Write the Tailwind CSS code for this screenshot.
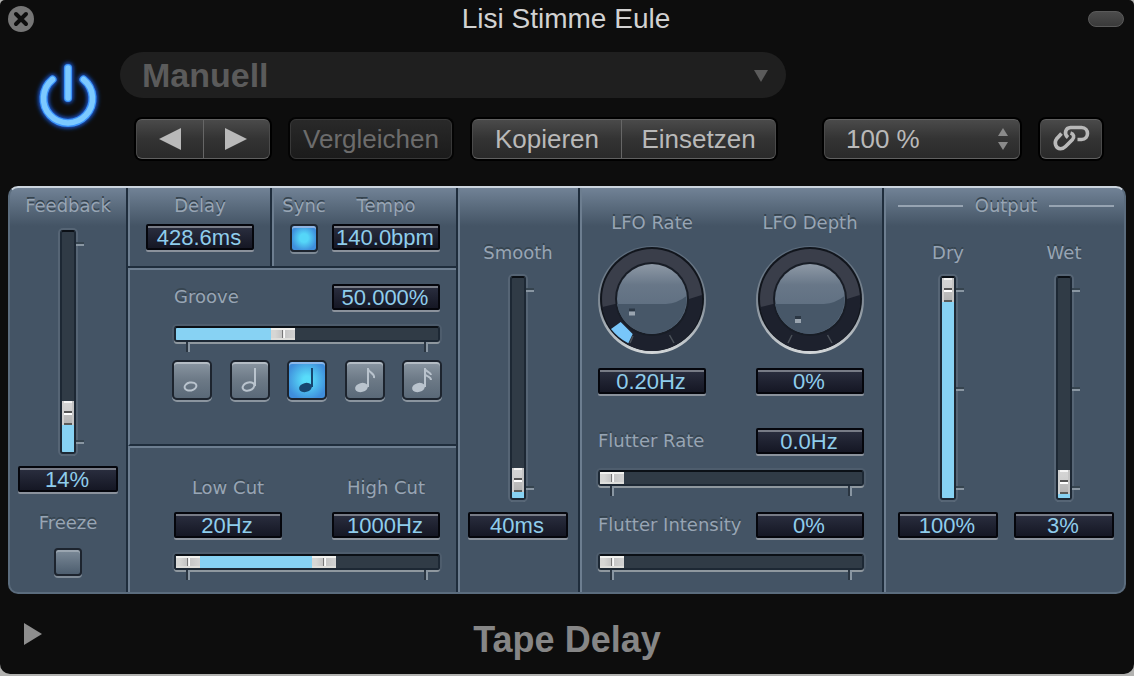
<!DOCTYPE html>
<html lang="de">

<head>
    <meta charset="UTF-8" />
    <meta name="viewport" content="width=device-width, initial-scale=1.0" />
    <title>Tape Delay</title>
    <script src="https://cdn.jsdelivr.net/npm/@tailwindcss/browser@4"></script>
</head>

<body class="min-h-screen bg-[#b2b2b0] font-['Liberation_Sans',Arial,sans-serif]">
    <main class="rounded-t-[5px] rounded-b-[10px] bg-[#0d0d0d]">
        <!-- Title bar -->
        <div class="grid h-[38px] grid-cols-[1fr_auto_1fr] items-center pl-2 pr-[10px]">
            <button aria-label="Schließen" class="size-[26px]">
                <svg viewBox="0 0 26 26" class="size-[26px]">
                    <circle cx="13" cy="13" r="13" fill="#767676" />
                    <path d="M8 8l10 10M18 8L8 18" stroke="#0d0d0d" stroke-width="4" stroke-linecap="round" />
                </svg>
            </button>
            <h1 class="text-[28px] leading-8 text-[#d2d2d2]">Lisi Stimme Eule</h1>
            <button aria-label="Minimieren" class="h-4 w-9 justify-self-end rounded-full border border-[#5a5a5a] bg-linear-to-b from-[#4c4c4c] to-[#3a3a3a]"></button>
        </div>

        <!-- Plug-in header -->
        <div class="flex pb-[27px] pt-[14px]">
            <button aria-label="Power" class="h-[88px] w-[120px] shrink-0 pl-[28px]">
                <svg viewBox="0 0 80 88" class="h-[88px] w-20 overflow-visible">
                    <defs>
                        <filter id="glow" x="-50%" y="-50%" width="200%" height="200%">
                            <feGaussianBlur stdDeviation="2.2" />
                        </filter>
                    </defs>
                    <g fill="none" stroke-linecap="round">
                        <g stroke="#1c62f0" stroke-width="10" filter="url(#glow)">
                            <path d="M24.500 27.500A24.500 24.500 0 1 0 55.500 27.500" />
                            <path d="M40 16V46" />
                        </g>
                        <g stroke="#3c95fb" stroke-width="8">
                            <path d="M24.500 27.500A24.500 24.500 0 1 0 55.500 27.500" />
                            <path d="M40 16V46" />
                        </g>
                        <g stroke="#7cc9ff" stroke-width="5.500">
                            <path d="M24.500 27.500A24.500 24.500 0 1 0 55.500 27.500" />
                            <path d="M40 16V46" />
                        </g>
                    </g>
                </svg>
            </button>
            <div class="flex-1">
                <div class="pr-[348px]">
                    <div class="relative">
                        <select aria-label="Preset" class="block h-[46px] w-full appearance-none rounded-full bg-[#1f1f1f] pl-[22px] text-[34px] font-bold leading-[46px] text-[#5b5b5b]">
                            <option>Manuell</option>
                        </select>
                        <svg viewBox="0 0 14 12" class="pointer-events-none absolute right-[18px] top-[18px] h-3 w-[14px]">
                            <path d="M0 0H14L7 12Z" fill="#5b5b5b" />
                        </svg>
                    </div>
                </div>
                <div class="mt-[21px] flex gap-5 pl-4 pr-8 text-[26px] leading-9 text-[#b9b9b9]">
                    <div class="flex h-10 w-[134px] rounded-md border border-[#606060] border-x-[#4a4a4a] bg-linear-to-b from-[#4a4a4a] via-[#333] to-[#2a2a2a] shadow-[0_0_0_2px_#000]">
                        <button aria-label="Vorheriges Preset" class="flex flex-1 items-center justify-center border-r border-[#666]">
                            <svg viewBox="0 0 22 22" class="size-[22px]"><path d="M22 0V22L0 11Z" fill="#b9b9b9" /></svg>
                        </button>
                        <button aria-label="Nächstes Preset" class="flex flex-1 items-center justify-center">
                            <svg viewBox="0 0 22 22" class="size-[22px]"><path d="M0 0V22L22 11Z" fill="#b9b9b9" /></svg>
                        </button>
                    </div>
                    <button class="h-10 w-[162px] rounded-md border border-[#383838] bg-linear-to-b from-[#292929] to-[#1b1b1b] text-[#6c6c6c] shadow-[0_0_0_2px_#040404]">Vergleichen</button>
                    <div class="flex h-10 w-[304px] rounded-md border border-[#606060] border-x-[#4a4a4a] bg-linear-to-b from-[#4a4a4a] via-[#333] to-[#2a2a2a] shadow-[0_0_0_2px_#000]">
                        <button class="w-[149px] border-r border-[#666]">Kopieren</button>
                        <button class="flex-1">Einsetzen</button>
                    </div>
                    <div class="relative ml-auto w-[196px]">
                        <select aria-label="Ansicht" class="block h-10 w-full appearance-none rounded-md border border-[#606060] border-x-[#4a4a4a] bg-linear-to-b from-[#4a4a4a] via-[#333] to-[#2a2a2a] pl-[21px] shadow-[0_0_0_2px_#000]">
                            <option>100 %</option>
                        </select>
                        <svg viewBox="0 0 10 22" class="pointer-events-none absolute right-3 top-[9px] h-[22px] w-[10px]">
                            <path d="M0 8L5 0L10 8ZM0 14H10L5 22Z" fill="#8a8a8a" />
                        </svg>
                    </div>
                    <button aria-label="Verknüpfen" class="flex h-10 w-[62px] items-center justify-center rounded-md border border-[#606060] border-x-[#4a4a4a] bg-linear-to-b from-[#4a4a4a] via-[#333] to-[#2a2a2a] shadow-[0_0_0_2px_#000]">
                        <svg viewBox="0 0 38 30" class="h-[30px] w-[38px]" fill="none" stroke="#b9b9b9" stroke-width="3.600">
                            <path d="M9.500 9.500L4.500 15C2 18.500 3.500 24.500 8.500 24.800C10.500 24.800 12 24 13.500 22.500L20.500 15.500C22.500 13 22 10 18.500 9" />
                            <path d="M16 13.500C11.500 10 13.500 3.700 18.500 3.500H29.500C37.500 3.700 37.500 15.300 29.500 15.500H25.500" />
                        </svg>
                    </button>
                </div>
            </div>
        </div>

        <!-- Parameter panel -->
        <div class="mx-2 grid grid-cols-[118fr_330fr_122fr_304fr_240fr] rounded-[10px] border-2 border-[#5b6c7d] border-t-[#cbd4de] bg-[#445465] bg-[linear-gradient(#718296,#5b6c7e_18px,#445465_38px)]">
            <!-- Feedback -->
            <div class="flex flex-col items-center border-r-2 border-[#1f2d3c] pt-2">
                <label data-label for="feedback">Feedback</label>
                <div class="mt-[14px] flex pl-2">
                    <input type="range" data-fader="v" id="feedback" value="14" />
                    <div data-ticks="v"><i></i><i></i></div>
                </div>
                <input type="text" data-field aria-label="Feedback Wert" class="mt-3 w-[100px]" value="14%" />
                <label data-label for="freeze" class="mt-[21px]">Freeze</label>
                <input type="checkbox" data-toggle id="freeze" class="mt-[15px]" />
            </div>

            <!-- Delay, groove, filter -->
            <div class="border-r-2 border-[#1f2d3c]">
                <div class="grid grid-cols-[144fr_184fr] border-b-2 border-[#1f2d3c]">
                    <div class="flex flex-col items-center border-x-2 border-l-[#6d7e90] border-r-[#1f2d3c] pt-2">
                        <label data-label for="delay">Delay</label>
                        <input type="text" data-field id="delay" class="mt-2 w-[108px]" value="428.6ms" />
                    </div>
                    <div class="flex justify-end border-l-2 border-[#6d7e90] pb-[14px] pr-4 pt-2">
                        <div class="flex w-14 flex-col items-center">
                            <label data-label for="sync">Sync</label>
                            <input type="checkbox" data-toggle id="sync" class="mt-2" checked />
                        </div>
                        <div class="flex flex-col items-center">
                            <label data-label for="tempo">Tempo</label>
                            <input type="text" data-field id="tempo" class="mt-2 w-[108px]" value="140.0bpm" />
                        </div>
                    </div>
                </div>
                <div class="border-b-2 border-l-2 border-t-2 border-b-[#1f2d3c] border-l-[#6d7e90] border-t-[#6d7e90] pb-11 pl-11 pr-4 pt-[14px]">
                    <div class="flex items-center justify-between">
                        <label data-label for="groove">Groove</label>
                        <input type="text" data-field aria-label="Groove Wert" class="w-[108px]" value="50.000%" />
                    </div>
                    <input type="range" data-fader="h" id="groove" class="mt-4" value="40" />
                    <div data-ticks="h"><i></i><i></i></div>
                    <div class="-mx-[2px] mt-2 flex justify-between">
                        <button data-note aria-label="Ganze Note">
                            <svg viewBox="0 0 36 36" fill="none" stroke="#b9c3cd" stroke-width="2">
                                <ellipse cx="16.500" cy="24.500" rx="6" ry="4" transform="rotate(-12 16.500 24.500)" />
                            </svg>
                        </button>
                        <button data-note aria-label="Halbe Note">
                            <svg viewBox="0 0 36 36" fill="none" stroke="#b9c3cd" stroke-width="2">
                                <ellipse cx="16.500" cy="24.500" rx="6" ry="4" transform="rotate(-18 16.500 24.500)" />
                                <path d="M23 6V24" />
                            </svg>
                        </button>
                        <button data-note aria-label="Viertelnote" aria-pressed="true">
                            <svg viewBox="0 0 36 36" fill="#17466f" stroke="#17466f">
                                <ellipse cx="16.500" cy="25.500" rx="6.500" ry="4.500" stroke="none" transform="rotate(-15 16.500 25.500)" />
                                <path d="M23 6V25" stroke-width="2" />
                            </svg>
                        </button>
                        <button data-note aria-label="Achtelnote">
                            <svg viewBox="0 0 36 36" fill="#b9c3cd" stroke="#b9c3cd">
                                <ellipse cx="14.500" cy="25.500" rx="6.500" ry="4.500" stroke="none" transform="rotate(-15 14.500 25.500)" />
                                <path d="M21 6V25M21 7C22 11 28 11 27 16" fill="none" stroke-width="2" />
                            </svg>
                        </button>
                        <button data-note aria-label="Sechzehntelnote">
                            <svg viewBox="0 0 36 36" fill="#b9c3cd" stroke="#b9c3cd">
                                <ellipse cx="14.500" cy="25.500" rx="6.500" ry="4.500" stroke="none" transform="rotate(-15 14.500 25.500)" />
                                <path d="M21 6V25M21 7C22 10 27 10 27 13M21 12C22 15 27 14 27 18" fill="none" stroke-width="2" />
                            </svg>
                        </button>
                    </div>
                </div>
                <div class="border-l-2 border-t-2 border-[#6d7e90] pb-3 pl-11 pr-4 pt-[30px]">
                    <div class="flex justify-between">
                        <div class="flex w-[108px] flex-col items-center">
                            <label data-label for="lowcut">Low Cut</label>
                            <input type="text" data-field aria-label="Low Cut Wert" class="mt-[14px] w-full" value="20Hz" />
                        </div>
                        <div class="flex w-[108px] flex-col items-center">
                            <label data-label for="highcut">High Cut</label>
                            <input type="text" data-field aria-label="High Cut Wert" class="mt-[14px] w-full" value="1000Hz" />
                        </div>
                    </div>
                    <!-- two thumbs share one track -->
                    <div class="mt-4 grid">
                        <input type="range" data-fader="h" id="highcut" class="col-start-1 row-start-1" value="57" />
                        <input type="range" data-fader="h" data-over id="lowcut" class="col-start-1 row-start-1" value="0" />
                    </div>
                    <div data-ticks="h"><i></i><i></i></div>
                </div>
            </div>

            <!-- Smooth -->
            <div class="flex flex-col items-center border-x-2 border-l-[#6d7e90] border-r-[#1f2d3c] pr-[2px] pt-[55px]">
                <label data-label for="smooth">Smooth</label>
                <div class="mt-[13px] flex pl-2">
                    <input type="range" data-fader="v" id="smooth" value="3" />
                    <div data-ticks="v"><i></i><i></i></div>
                </div>
                <input type="text" data-field aria-label="Smooth Wert" class="mt-3 w-[100px]" value="40ms" />
            </div>

            <!-- LFO and flutter -->
            <div class="border-x-2 border-l-[#6d7e90] border-r-[#1f2d3c] pl-4 pr-[18px] pt-[25px]">
                <div class="flex justify-between">
                    <div class="flex flex-col items-center">
                        <label data-label for="lforate">LFO Rate</label>
                        <div class="relative mt-[13px] size-[108px]">
                            <svg viewBox="0 0 108 108" class="size-[108px]">
                                <defs>
                                    <linearGradient id="rim" x1="0" y1="0" x2="0" y2="1">
                                        <stop offset="0" stop-color="#59697a" />
                                        <stop offset=".5" stop-color="#7d8893" />
                                        <stop offset="1" stop-color="#d3d7d9" />
                                    </linearGradient>
                                    <linearGradient id="cap" x1="0" y1="0" x2="0" y2="1">
                                        <stop offset="0" stop-color="#8e99a6" />
                                        <stop offset=".3" stop-color="#687788" />
                                        <stop offset="1" stop-color="#56677a" />
                                    </linearGradient>
                                </defs>
                                <circle cx="54" cy="54" r="54" fill="url(#rim)" />
                                <circle cx="54" cy="53" r="52" fill="#11151c" />
                                <circle cx="54" cy="53" r="50" fill="#3a3e4a" />
                                <path d="M4.500 61L17 58L91 53L103.800 49A50 50 0 0 1 4.500 61Z" fill="#1d212d" />
                                <path d="M35 90L32 97M71.500 89L76 97" stroke="#4a5058" stroke-width="1.500" />
                                <circle cx="54" cy="53" r="37" fill="#181d26" />
                                <circle cx="54" cy="53" r="35" fill="url(#cap)" />
                                <path d="M13 83L22.700 76L34.700 88L30.300 97.300Q20 92 13 83Z" fill="#78c6fa" />
                                <path d="M19 58H68Q80 57 88.500 50A35 35 0 0 1 19 58Z" fill="#475768" />
                                <path d="M31 64H37" stroke="#2b3744" stroke-width="3" />
                                <path d="M31 67.500H37" stroke="#9aa5b0" stroke-width="4" />
                            </svg>
                            <input type="range" id="lforate" class="absolute inset-0 size-full opacity-0" value="8" />
                        </div>
                        <input type="text" data-field aria-label="LFO Rate Wert" class="mt-[14px] w-[108px]" value="0.20Hz" />
                    </div>
                    <div class="flex flex-col items-center">
                        <label data-label for="lfodepth">LFO Depth</label>
                        <div class="relative mt-[13px] size-[108px]">
                            <svg viewBox="0 0 108 108" class="size-[108px]">
                                <circle cx="54" cy="54" r="54" fill="url(#rim)" />
                                <circle cx="54" cy="53" r="52" fill="#11151c" />
                                <circle cx="54" cy="53" r="50" fill="#3a3e4a" />
                                <path d="M4.500 61L17 58L91 53L103.800 49A50 50 0 0 1 4.500 61Z" fill="#1d212d" />
                                <path d="M36 89L32 97M71.500 89L76 97" stroke="#4a5058" stroke-width="1.500" />
                                <circle cx="54" cy="53" r="37" fill="#181d26" />
                                <circle cx="54" cy="53" r="35" fill="url(#cap)" />
                                <path d="M19 58H68Q80 57 88.500 50A35 35 0 0 1 19 58Z" fill="#475768" />
                                <path d="M39 71.500H45" stroke="#2b3744" stroke-width="3" />
                                <path d="M39 75H45" stroke="#9aa5b0" stroke-width="4" />
                            </svg>
                            <input type="range" id="lfodepth" class="absolute inset-0 size-full opacity-0" value="0" />
                        </div>
                        <input type="text" data-field aria-label="LFO Depth Wert" class="mt-[14px] w-[108px]" value="0%" />
                    </div>
                </div>
                <div class="mt-[34px] flex items-center justify-between">
                    <label data-label for="flutterrate">Flutter Rate</label>
                    <input type="text" data-field aria-label="Flutter Rate Wert" class="w-[108px]" value="0.0Hz" />
                </div>
                <input type="range" data-fader="h" id="flutterrate" class="mt-4" value="0" />
                <div data-ticks="h"><i></i><i></i></div>
                <div class="mt-4 flex items-center justify-between">
                    <label data-label for="flutterint">Flutter Intensity</label>
                    <input type="text" data-field aria-label="Flutter Intensity Wert" class="w-[108px]" value="0%" />
                </div>
                <input type="range" data-fader="h" id="flutterint" class="mt-4" value="0" />
                <div data-ticks="h"><i></i><i></i></div>
            </div>

            <!-- Output -->
            <div class="border-l-2 border-[#6d7e90] pl-3 pr-[10px] pt-2">
                <div class="flex items-center gap-3">
                    <span class="h-[2px] flex-1 bg-[#97a4b2]"></span>
                    <h2 data-label>Output</h2>
                    <span class="h-[2px] flex-1 bg-[#97a4b2]"></span>
                </div>
                <div class="mt-[27px] flex justify-between">
                    <div class="flex flex-col items-center">
                        <label data-label for="dry">Dry</label>
                        <div class="mt-[13px] flex pl-2">
                            <input type="range" data-fader="v" id="dry" value="100" />
                            <div data-ticks="v"><i></i><i></i><i></i></div>
                        </div>
                        <input type="text" data-field aria-label="Dry Wert" class="mt-3 w-[100px]" value="100%" />
                    </div>
                    <div class="flex flex-col items-center">
                        <label data-label for="wet">Wet</label>
                        <div class="mt-[13px] flex pl-2">
                            <input type="range" data-fader="v" id="wet" value="2" />
                            <div data-ticks="v"><i></i><i></i><i></i></div>
                        </div>
                        <input type="text" data-field aria-label="Wet Wert" class="mt-3 w-[100px]" value="3%" />
                    </div>
                </div>
            </div>
        </div>

        <!-- Footer -->
        <div class="grid h-20 grid-cols-[1fr_auto_1fr] items-center pl-6">
            <button aria-label="Erweitern" class="h-[22px] w-[18px]">
                <svg viewBox="0 0 18 22" class="h-[22px] w-[18px]"><path d="M0 0V22L18 11Z" fill="#8e8e8e" /></svg>
            </button>
            <p class="pr-6 pt-3 text-[36px] font-bold leading-10 text-[#868686]">Tape Delay</p>
        </div>
    </main>

    <script>
        const add = (selector, classes) => {
            document.querySelectorAll(selector).forEach((el) => {
                el.className = `${el.className} ${classes}`;
            });
        };

        add('[data-label]', "font-['DejaVu_Sans',sans-serif] text-[18px] leading-5 text-[#98a5b4] whitespace-nowrap [text-shadow:0_-2px_0_#36444f]");
        add('[data-field]', 'block h-[26px] rounded-[2px] border-2 border-[#05060c] bg-linear-to-b from-[#2b2f40] to-[#151724] pr-[2px] pt-[2px] text-center text-[22px] leading-5 text-[#8fcdec] shadow-[0_2px_0_#8b929c,inset_0_2px_0_#777b86]');
        add('[data-toggle]', 'block size-7 appearance-none rounded-[4px] border-2 border-[#1d242e] bg-linear-to-b from-[#7c8a98] to-[#4d5e6f] shadow-[0_2px_0_#7e8a96,inset_0_2px_0_#9aa5b0] checked:bg-[radial-gradient(circle,#55d6f8_25%,#3f8fdc_75%)] checked:shadow-[0_2px_0_#7e8a96,inset_0_2px_0_#8fb4e2]');
        add('[data-note]', 'block size-10 rounded-[5px] border-2 border-[#1d242e] bg-linear-to-b from-[#8a96a2] via-[#6c7986] to-[#5a6978] shadow-[0_2px_0_#8b959f,inset_0_2px_0_#b4bcc4] aria-pressed:bg-[radial-gradient(circle,#58dcfa_15%,#3f8edb_80%)] aria-pressed:shadow-[0_2px_0_#8b959f,inset_0_2px_0_#8db8ea]');
        add('[data-fader]', 'block appearance-none rounded-[3px] border-2 border-[#1d2834] border-t-[#0b1016] bg-[#303b46] bg-no-repeat');
        add('[data-fader=v]', 'h-56 w-4 [writing-mode:vertical-lr] [direction:rtl] shadow-[0_0_0_2px_#566575,0_2px_0_#7c8791] [&::-webkit-slider-thumb]:h-6 [&::-webkit-slider-thumb]:w-3 [&::-webkit-slider-thumb]:appearance-none [&::-webkit-slider-thumb]:bg-[linear-gradient(90deg,#d0d0d0_2px,transparent_2px,transparent_10px,#c4c4c4_10px),linear-gradient(#f4f4f4_2px,#d4d4d4_2px,#cfcfcf_10px,#555_10px,#555_12px,#fff_12px,#fff_14px,#bdbdbd_14px,#b4b4b4_22px,#5a5a58_22px)]');
        add('[data-fader=h]', 'h-4 w-full shadow-[0_2px_0_#8f989f,0_0_0_2px_#4e5d6d] [&::-webkit-slider-thumb]:h-3 [&::-webkit-slider-thumb]:w-6 [&::-webkit-slider-thumb]:appearance-none [&::-webkit-slider-thumb]:bg-[linear-gradient(#f1f1ee_2px,transparent_2px,transparent_10px,#dededb_10px),linear-gradient(90deg,#d6d6d4_4px,#c4c4c4_11px,#777_11px,#777_12px,#e6e6e6_12px,#fff_14px,#c6c6c6_14px,#d3d3d3)]');
        add('[data-over]', 'pointer-events-none bg-transparent! shadow-none! [&::-webkit-slider-thumb]:pointer-events-auto');
        add('[data-ticks=v]', 'flex w-2 flex-col justify-between pb-[10px] pt-3 *:h-1 *:border-b-2 *:border-t-2 *:border-b-[#8996a2] *:border-t-[#36444f]');
        add('[data-ticks=h]', 'flex h-[10px] justify-between px-3 *:w-1 *:border-l-2 *:border-r-2 *:border-l-[#2a3541] *:border-r-[#8996a2]');

        // Fill runs from the low end of the track to the centre of the thumb
        const paint = (el) => {
            if ('over' in el.dataset) return;
            const v = el.value / 100;
            if (v === 0) {
                el.style.backgroundImage = 'none';
                return;
            }
            const dir = el.dataset.fader === 'v' ? 'to top' : 'to right';
            const end = `calc(12px + (100% - 24px) * ${v})`;
            el.style.backgroundImage = `linear-gradient(${dir}, #87d2f3 ${end}, transparent ${end})`;
        };
        document.querySelectorAll('[data-fader]').forEach((el) => {
            paint(el);
            el.addEventListener('input', () => paint(el));
        });
    </script>
</body>

</html>
